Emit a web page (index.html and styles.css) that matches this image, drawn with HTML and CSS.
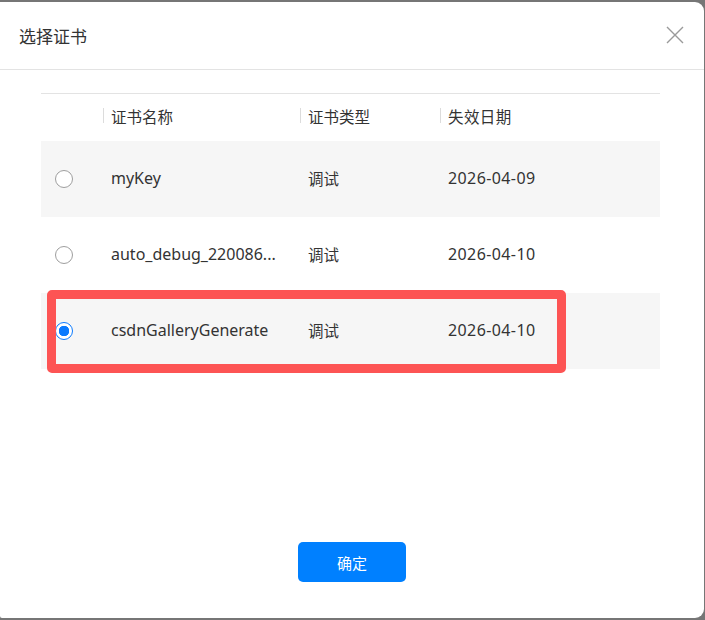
FILE: index.html
```html
<!DOCTYPE html>
<html lang="zh-CN">
<head>
    <meta charset="UTF-8">
    <title>选择证书</title>
    <link rel="stylesheet" href="styles.css">
</head>
<body>
    <div class="dialog">
        <div class="dialog-header">
            <span class="dialog-title">选择证书</span>
            <svg class="close" width="18" height="18" viewBox="0 0 18 18">
                <path d="M1 1L17 17M17 1L1 17" stroke="#9a9a9a" stroke-width="1.4" fill="none"/>
            </svg>
        </div>

        <div class="dialog-body">
            <div class="table">
                <div class="row head">
                    <div class="cell c-radio"></div>
                    <div class="cell c-name"><span class="sep"></span>证书名称</div>
                    <div class="cell c-type"><span class="sep"></span>证书类型</div>
                    <div class="cell c-date"><span class="sep"></span>失效日期</div>
                </div>
                <div class="row striped">
                    <div class="cell c-radio"><span class="radio"></span></div>
                    <div class="cell c-name">myKey</div>
                    <div class="cell c-type">调试</div>
                    <div class="cell c-date">2026-04-09</div>
                </div>
                <div class="row">
                    <div class="cell c-radio"><span class="radio"></span></div>
                    <div class="cell c-name">auto_debug_220086...</div>
                    <div class="cell c-type">调试</div>
                    <div class="cell c-date">2026-04-10</div>
                </div>
                <div class="row striped marked">
                    <div class="cell c-radio"><span class="radio checked"></span></div>
                    <div class="cell c-name">csdnGalleryGenerate</div>
                    <div class="cell c-type">调试</div>
                    <div class="cell c-date">2026-04-10</div>
                    <div class="highlight"></div>
                </div>
            </div>
        </div>

        <div class="dialog-footer">
            <button class="btn-ok">确定</button>
        </div>
    </div>
</body>
</html>
```

FILE: styles.css
```css
* {
    box-sizing: border-box;
}
body {
    margin: 0;
    background-color: #767676;
    font-family: "Segoe UI", "Noto Sans", "Noto Sans CJK SC", sans-serif;
    color: #333;
    width: 705px;
    height: 620px;
    overflow: hidden;
}
.dialog {
    margin-top: 2px;
    width: 704px;
    height: 616px;
    background: white;
    border-radius: 0 9px 9px 2px;
    display: flex;
    flex-direction: column;
}
.dialog-header {
    height: 68px;
    border-bottom: 1px solid #e3e3e3;
    display: flex;
    align-items: center;
    justify-content: space-between;
    padding: 0 20px 0 19px;
}
.dialog-title {
    font-family: "Noto Sans CJK SC", sans-serif;
    font-size: 17px;
    color: #333;
    margin-top: -1px;
}
.close {
    margin-top: -1px;
}
.dialog-body {
    flex: 1;
    padding: 23px 44px 0 41px;
}
.table {
    border-top: 1px solid #e3e3e3;
}
.row {
    display: flex;
    align-items: center;
    height: 76px;
    padding-bottom: 3px;
    font-size: 16px;
    position: relative;
}
.row.head {
    height: 47px;
    padding-bottom: 4px;
    font-size: 15.5px;
    font-family: "Noto Sans CJK SC", sans-serif;
}
.row.striped {
    background-color: #f6f6f6;
}
.cell {
    display: flex;
    align-items: center;
    white-space: nowrap;
}
.c-radio {
    width: 62px;
    padding-left: 14px;
    padding-top: 2px;
}
.c-name {
    width: 197px;
    padding-left: 8px;
}
.c-type {
    width: 140px;
    padding-left: 8px;
    font-size: 15.5px;
    font-family: "Noto Sans CJK SC", sans-serif;
}
.c-date {
    padding-left: 8px;
    letter-spacing: 0.4px;
}
.sep {
    position: absolute;
    margin-left: -8px;
    width: 1px;
    height: 15px;
    background-color: #dcdcdc;
}
.radio {
    width: 18px;
    height: 18px;
    border: 1px solid #9e9e9e;
    border-radius: 50%;
    background: white;
}
.radio.checked {
    border-color: #0a7aff;
    background: radial-gradient(circle, #0a7aff 0 5px, white 5.5px);
}
.highlight {
    position: absolute;
    left: 6px;
    top: -3px;
    width: 519px;
    height: 83px;
    border: 9.5px solid #fd5454;
    border-radius: 5px;
}
.dialog-footer {
    display: flex;
    justify-content: center;
    padding: 0 0 36px 0;
}
.btn-ok {
    width: 108px;
    height: 40px;
    background-color: #0080ff;
    color: white;
    border: none;
    border-radius: 5px;
    font-family: "Noto Sans CJK SC", sans-serif;
    font-size: 15px;
    cursor: pointer;
}
```
